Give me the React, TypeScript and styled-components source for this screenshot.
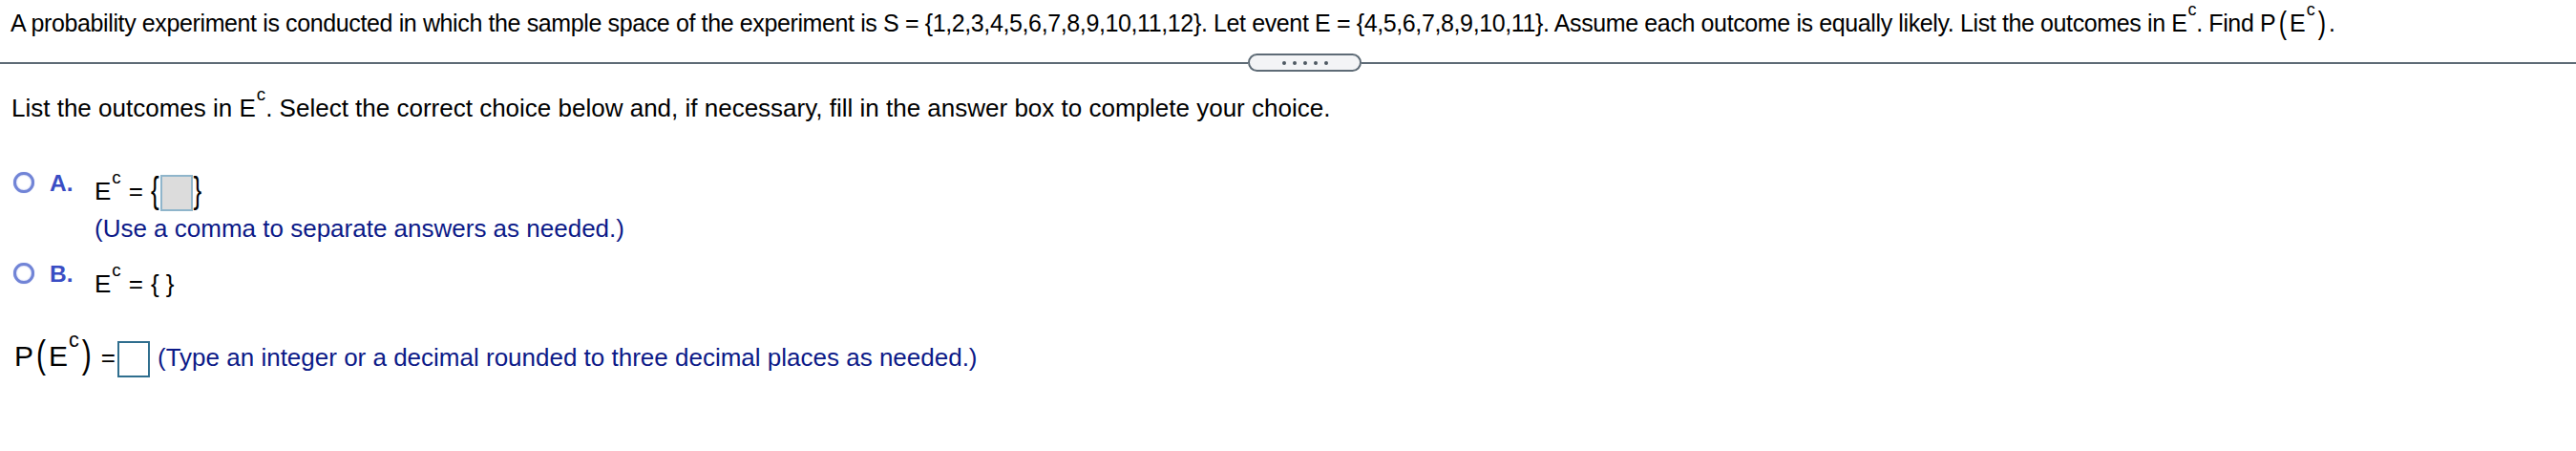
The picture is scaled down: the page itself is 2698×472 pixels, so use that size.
import React from "react";
import styled, { createGlobalStyle } from "styled-components";

const GlobalStyle = createGlobalStyle`
  html, body {
    margin: 0;
    padding: 0;
    background: #ffffff;
  }
  body {
    font-family: "Liberation Sans", Arial, Helvetica, sans-serif;
    color: #000000;
  }
`;

const Page = styled.div`
  width: 2698px;
  height: 472px;
  overflow: hidden;
  font-size: 26px;
`;

const Question = styled.p`
  margin: 0;
  padding: 9px 0 0 11px;
  font-size: 25px;
  letter-spacing: -0.38px;
  line-height: 30px;
  white-space: nowrap;
`;

const Divider = styled.div`
  display: flex;
  align-items: center;
  height: 19px;
  margin-top: 17px;
`;

const Rule = styled.div<{ $width?: number }>`
  height: 2px;
  background: #5e6b76;
  flex: ${(p) => (p.$width ? `0 0 ${p.$width}px` : "1 1 auto")};
`;

const Pill = styled.div`
  box-sizing: border-box;
  width: 119px;
  height: 19px;
  border: 2px solid #5e6b76;
  border-radius: 10px;
  background: #f3f4f6;
  display: flex;
  align-items: center;
  justify-content: center;
  gap: 7px;
`;

const Dot = styled.span`
  width: 4px;
  height: 4px;
  border-radius: 50%;
  background: #4f5963;
`;

const Prompt = styled.p`
  margin: 23px 0 0;
  padding-left: 12px;
  line-height: 30px;
  white-space: nowrap;
`;

const Sup = styled.sup`
  font-size: 0.72em;
  vertical-align: 0.92em;
  line-height: 0;
  margin-left: 1px;
`;

const Math = styled.span<{ $size?: number }>`
  font-size: ${(p) => (p.$size ? `${p.$size}px` : "inherit")};
  letter-spacing: 0;
`;

const Paren = styled.span`
  display: inline-block;
  transform: scaleY(1.35);
  transform-origin: 50% 62%;
  margin: 0 3px;
`;

const Brace = styled.span<{ $tall?: boolean }>`
  display: inline-block;
  transform: ${(p) => (p.$tall ? "scaleY(1.5)" : "none")};
  transform-origin: 50% 62%;
`;

const OptionRow = styled.div<{ $top: number }>`
  display: flex;
  align-items: flex-start;
  padding-left: 14px;
  margin-top: ${(p) => p.$top}px;
`;

const Radio = styled.span`
  box-sizing: border-box;
  flex: 0 0 22px;
  height: 22px;
  margin-right: 16px;
  border-radius: 50%;
  border: 3px solid #7184d6;
  background: #ffffff;
  box-shadow: inset 0 0 2px #b7c1ef, 0 0 1px #9aa7e6;
`;

const Letter = styled.span`
  flex: 0 0 47px;
  font-size: 24.5px;
  line-height: 24px;
  font-weight: bold;
  color: #3a4dc4;
`;

const Body = styled.div<{ $top: number }>`
  margin-top: ${(p) => p.$top}px;
  line-height: 30px;
  white-space: nowrap;
`;

const Eq = styled.span<{ $left?: number; $right?: number }>`
  margin: 0 ${(p) => p.$right ?? 8}px 0 ${(p) => p.$left ?? 8}px;
`;

const AnswerBox = styled.span<{ $filled?: boolean }>`
  box-sizing: border-box;
  display: inline-block;
  width: 34px;
  height: 38px;
  vertical-align: -12px;
  margin: 0 1px;
  background: ${(p) => (p.$filled ? "#dcdcdc" : "#ffffff")};
  border: 2px solid ${(p) => (p.$filled ? "#8fb5cb" : "#2f6e8e")};
`;

const Hint = styled.div`
  margin-top: 3px;
  color: #0c1a88;
  line-height: 30px;
`;

const AnswerLine = styled.p`
  margin: 44px 0 0;
  padding-left: 15px;
  line-height: 30px;
  white-space: nowrap;
`;

const Note = styled.span`
  color: #0c1a88;
  margin-left: 7px;
`;

const Ec: React.FC = () => (
  <>
    E<Sup>c</Sup>
  </>
);

const PofEc: React.FC<{ size?: number }> = ({ size }) => (
  <Math $size={size}>
    P<Paren>(</Paren>
    <Ec />
    <Paren>)</Paren>
  </Math>
);

export default function App() {
  return (
    <Page>
      <GlobalStyle />
      <Question>
        A probability experiment is conducted in which the sample space of the experiment is S = {"{"}1,2,3,4,5,6,7,8,9,10,11,12{"}"}. Let event E = {"{"}4,5,6,7,8,9,10,11{"}"}. Assume each outcome is equally likely. List the outcomes in <Ec />. Find <PofEc />.
      </Question>

      <Divider>
        <Rule $width={1307} />
        <Pill>
          <Dot />
          <Dot />
          <Dot />
          <Dot />
          <Dot />
        </Pill>
        <Rule />
      </Divider>

      <Prompt>
        List the outcomes in <Ec />. Select the correct choice below and, if necessary, fill in the answer box to complete your choice.
      </Prompt>

      <OptionRow $top={52}>
        <Radio />
        <Letter>A.</Letter>
        <Body $top={3}>
          <div>
            <Ec />
            <Eq>=</Eq>
            <Brace $tall>{"{"}</Brace>
            <AnswerBox $filled />
            <Brace $tall>{"}"}</Brace>
          </div>
          <Hint>(Use a comma to separate answers as needed.)</Hint>
        </Body>
      </OptionRow>

      <OptionRow $top={21}>
        <Radio />
        <Letter>B.</Letter>
        <Body $top={7}>
          <Ec />
          <Eq>=</Eq>
          <Brace>{"{"}</Brace> <Brace>{"}"}</Brace>
        </Body>
      </OptionRow>

      <AnswerLine>
        <PofEc size={30} />
        <Eq $left={7} $right={1}>=</Eq>
        <AnswerBox />
        <Note>(Type an integer or a decimal rounded to three decimal places as needed.)</Note>
      </AnswerLine>
    </Page>
  );
}
